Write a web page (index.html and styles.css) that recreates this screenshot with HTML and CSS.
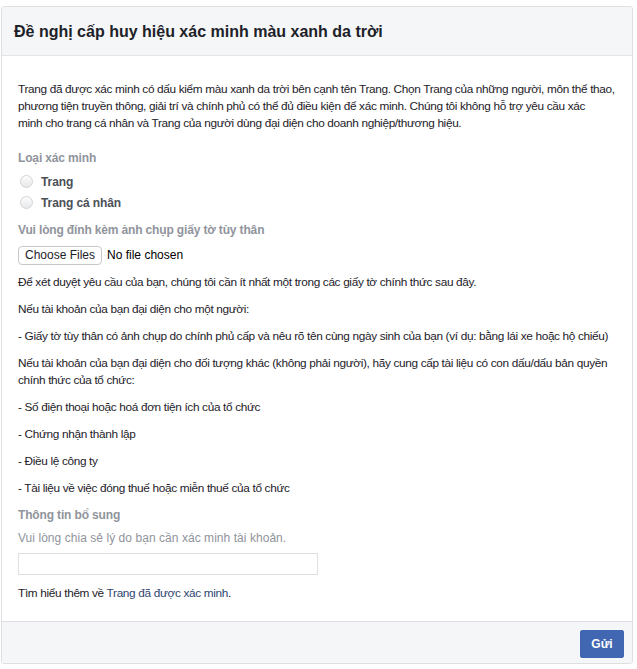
FILE: index.html
```html
<!DOCTYPE html>
<html lang="vi">
<head>
<meta charset="utf-8">
<title>Đề nghị cấp huy hiệu xác minh</title>
<link rel="stylesheet" href="styles.css">
</head>
<body>
<div class="card">
  <div class="card-header">
    <h1 class="title">Đề nghị cấp huy hiệu xác minh màu xanh da trời</h1>
  </div>
  <div class="card-body">
    <p class="text intro">Trang đã được xác minh có dấu kiểm màu xanh da trời bên cạnh tên Trang. Chọn Trang của những người, môn thể thao, phương tiện truyền thông, giải trí và chính phủ có thể đủ điều kiện để xác minh. Chúng tôi không hỗ trợ yêu cầu xác<br>minh cho trang cá nhân và Trang của người dùng đại diện cho doanh nghiệp/thương hiệu.</p>

    <div class="field-label">Loại xác minh</div>
    <div class="radios">
      <label class="radio-row"><span class="radio"></span><span class="radio-text">Trang</span></label>
      <label class="radio-row"><span class="radio"></span><span class="radio-text">Trang cá nhân</span></label>
    </div>

    <div class="field-label second">Vui lòng đính kèm ảnh chụp giấy tờ tùy thân</div>
    <div class="file-row">
      <button class="file-btn" type="button">Choose Files</button>
      <span class="file-name">No file chosen</span>
    </div>

    <p class="text first-doc">Để xét duyệt yêu cầu của bạn, chúng tôi cần ít nhất một trong các giấy tờ chính thức sau đây.</p>
    <p class="text">Nếu tài khoản của bạn đại diện cho một người:</p>
    <p class="text">- Giấy tờ tùy thân có ảnh chụp do chính phủ cấp và nêu rõ tên cùng ngày sinh của bạn (ví dụ: bằng lái xe hoặc hộ chiếu)</p>
    <p class="text">Nếu tài khoản của bạn đại diện cho đối tượng khác (không phải người), hãy cung cấp tài liệu có con dấu/dấu bản quyền chính thức của tổ chức:</p>
    <p class="text">- Số điện thoại hoặc hoá đơn tiện ích của tổ chức</p>
    <p class="text">- Chứng nhận thành lập</p>
    <p class="text">- Điều lệ công ty</p>
    <p class="text">- Tài liệu về việc đóng thuế hoặc miễn thuế của tổ chức</p>

    <div class="field-label extra">Thông tin bổ sung</div>
    <p class="hint">Vui lòng chia sẻ lý do bạn cần xác minh tài khoản.</p>
    <input class="reason" type="text">
    <p class="text more">Tìm hiểu thêm về <a class="link" href="#">Trang đã được xác minh</a>.</p>
  </div>
  <div class="card-footer">
    <button class="submit" type="button">Gửi</button>
  </div>
</div>
</body>
</html>
```

FILE: styles.css
```css
* { box-sizing: border-box; }

body {
  margin: 6px 0 0 1px;
  font-family: "Liberation Sans", Arial, sans-serif;
  color: #1d2129;
  background: #fff;
}

.card {
  width: 632px;
  border: 1px solid #dddfe2;
  border-radius: 3px;
  background: #fff;
  overflow: hidden;
}

.card-header {
  height: 49px;
  background: #f5f6f7;
  border-bottom: 1px solid #e5e5e5;
  display: flex;
  align-items: center;
  padding: 0 12px;
}

.title {
  margin: 0;
  font-size: 16px;
  line-height: 19px;
  font-weight: bold;
  color: #1d2129;
}

.card-body {
  padding: 25px 16px 19px 16px;
}

.text {
  margin: 0 0 10px;
  font-size: 11.8px;
  line-height: 17px;
  letter-spacing: -0.33px;
  color: #1d2129;
}

.intro {
  margin-bottom: 18px;
}

.field-label {
  font-size: 12px;
  line-height: 17px;
  font-weight: bold;
  letter-spacing: -0.15px;
  color: #90949c;
}

.field-label.second {
  margin-top: 9px;
}

.radios {
  margin-top: 4px;
  display: flex;
  flex-direction: column;
}

.radio-row {
  height: 21px;
  display: flex;
  align-items: center;
  gap: 8px;
  padding-left: 2px;
}

.radio {
  width: 13px;
  height: 13px;
  border-radius: 50%;
  border: 1px solid #d3d4d7;
  background: linear-gradient(#fdfdfd, #e6e7e9);
}

.radio-text {
  font-size: 12px;
  font-weight: bold;
  letter-spacing: -0.1px;
  color: #4b4f56;
}

.file-row {
  margin-top: 7px;
  height: 18px;
  display: flex;
  align-items: center;
  gap: 5px;
  margin-bottom: 10px;
}

.file-btn {
  height: 19px;
  padding: 0 6px;
  font-family: "Liberation Sans", Arial, sans-serif;
  font-size: 12px;
  color: #1d2129;
  background: #fff;
  border: 1px solid #c6c8cc;
  border-radius: 4px;
}

.file-name {
  font-size: 12px;
  color: #000;
}

.field-label.extra {
  margin-top: 0;
  margin-bottom: 6px;
}

.hint {
  margin: 0 0 6px;
  font-size: 12px;
  line-height: 17px;
  letter-spacing: 0.05px;
  color: #90949c;
}

.reason {
  display: block;
  width: 300px;
  height: 22px;
  border: 1px solid #dddfe2;
  background: #fff;
  margin: 0 0 10px;
}

.more {
  margin: 0;
}

.link {
  color: #2f4570;
  text-decoration: none;
}

.card-footer {
  background: #f5f6f7;
  border-top: 1px solid #dddfe2;
  padding: 8px 8px 5px;
  display: flex;
  justify-content: flex-end;
}

.submit {
  width: 44px;
  height: 28px;
  background: #4267b2;
  border: 1px solid #4267b2;
  border-radius: 2px;
  color: #fff;
  font-family: "Liberation Sans", Arial, sans-serif;
  font-size: 12px;
  font-weight: bold;
  padding: 0;
}
```
